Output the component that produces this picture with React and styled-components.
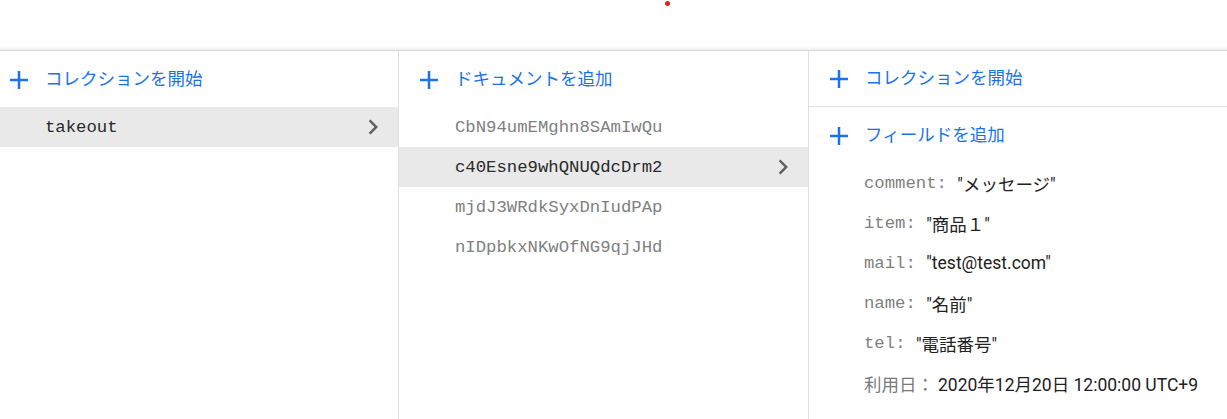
import React from "react";
import styled, { createGlobalStyle } from "styled-components";

const GlobalStyle = createGlobalStyle`
  html, body { margin: 0; padding: 0; background: #ffffff; }
  body {
    font-family: Roboto, "Noto Sans CJK JP", "Noto Sans", sans-serif;
    -webkit-font-smoothing: antialiased;
  }
  * { box-sizing: border-box; }
`;

const Page = styled.div`
  width: 1227px;
  height: 419px;
  overflow: hidden;
  display: flex;
  flex-direction: column;
  background: #fff;
`;

const TopBar = styled.div`
  position: relative;
  height: 51px;
  flex: none;
  background: linear-gradient(to bottom, #ffffff 0, #ffffff 46px, #f7f7f7 48px, #f0f0f0 50px);
  border-bottom: 1px solid #d6d6d6;
`;

const RecordDot = styled.span`
  position: absolute;
  left: 665px;
  top: 1px;
  width: 5px;
  height: 5px;
  border-radius: 50%;
  background: #e0201b;
`;

const Columns = styled.div`
  flex: 1;
  display: grid;
  grid-template-columns: 399px 410px 1fr;
  min-height: 0;
`;

const Column = styled.section`
  display: flex;
  flex-direction: column;
  border-right: ${(p) => (p.$last ? "none" : "1px solid #e0e0e0")};
  min-width: 0;
`;

const ActionRow = styled.div`
  height: 56px;
  flex: none;
  display: flex;
  align-items: center;
  padding-left: ${(p) => p.$indent}px;
  gap: 17px;
  color: #1a73e8;
  font-size: 17.5px;
  border-bottom: ${(p) => (p.$divider ? "1px solid #e0e0e0" : "none")};
`;

const PlusIcon = styled.svg`
  width: 18px;
  height: 18px;
  flex: none;
  margin-top: 1px;
`;

const ActionLabel = styled.span`
  line-height: 1;
  padding-top: 1px;
`;

const ItemRow = styled.div`
  height: 40px;
  flex: none;
  display: flex;
  align-items: center;
  justify-content: space-between;
  padding-left: ${(p) => p.$indent}px;
  padding-right: 10px;
  background: ${(p) => (p.$selected ? "#e9e9e9" : "transparent")};
`;

const MonoText = styled.span`
  font-family: "Liberation Mono", "DejaVu Sans Mono", monospace;
  font-size: 17.3px;
  color: ${(p) => (p.$dark ? "#2a2a2a" : "#808080")};
  white-space: nowrap;
`;

const Chevron = styled.svg`
  width: 30px;
  height: 30px;
  flex: none;
`;

const FieldRow = styled.div`
  height: 40px;
  flex: none;
  display: flex;
  align-items: center;
  padding-left: 55px;
  white-space: nowrap;
`;

const FieldKey = styled.span`
  font-family: "Liberation Mono", "DejaVu Sans Mono", monospace;
  font-size: 17.3px;
  color: #808080;
  white-space: pre;
`;

const FieldLabel = styled.span`
  font-family: Roboto, "Noto Sans CJK JP", sans-serif;
  font-size: 17.5px;
  color: #7a7a7a;
  margin-right: 4px;
`;

const FieldValue = styled.span`
  font-family: Roboto, "Noto Sans CJK JP", sans-serif;
  font-size: 17.5px;
  color: #212121;
  letter-spacing: 0;
`;

const Plus = () => (
  <PlusIcon viewBox="0 0 18 18">
    <path d="M9 0v18M0 9h18" stroke="#1a73e8" strokeWidth="2.5" fill="none" />
  </PlusIcon>
);

const ChevronRight = () => (
  <Chevron viewBox="0 0 24 24">
    <path d="M10 6L8.59 7.41 13.17 12l-4.58 4.59L10 18l6-6z" fill="#616161" />
  </Chevron>
);

const Action = ({ indent, divider, children }) => (
  <ActionRow $indent={indent} $divider={divider}>
    <Plus />
    <ActionLabel>{children}</ActionLabel>
  </ActionRow>
);

const documents = [
  "CbN94umEMghn8SAmIwQu",
  "c40Esne9whQNUQdcDrm2",
  "mjdJ3WRdkSyxDnIudPAp",
  "nIDpbkxNKwOfNG9qjJHd",
];

const fields = [
  ["comment", '"メッセージ"'],
  ["item", '"商品１"'],
  ["mail", '"test@test.com"'],
  ["name", '"名前"'],
  ["tel", '"電話番号"'],
];

export default function App() {
  return (
    <>
      <GlobalStyle />
      <Page>
        <TopBar>
          <RecordDot />
        </TopBar>
        <Columns>
          <Column>
            <Action indent={10}>コレクションを開始</Action>
            <ItemRow $indent={45} $selected>
              <MonoText $dark>takeout</MonoText>
              <ChevronRight />
            </ItemRow>
          </Column>
          <Column>
            <Action indent={21}>ドキュメントを追加</Action>
            {documents.map((id, i) => (
              <ItemRow key={id} $indent={56} $selected={i === 1}>
                <MonoText $dark={i === 1}>{id}</MonoText>
                {i === 1 && <ChevronRight />}
              </ItemRow>
            ))}
          </Column>
          <Column $last>
            <Action indent={21} divider>
              コレクションを開始
            </Action>
            <Action indent={21}>フィールドを追加</Action>
            {fields.map(([k, v]) => (
              <FieldRow key={k}>
                <FieldKey>{k}: </FieldKey>
                <FieldValue>{v}</FieldValue>
              </FieldRow>
            ))}
            <FieldRow>
              <FieldLabel>利用日：</FieldLabel>
              <FieldValue>2020年12月20日 12:00:00 UTC+9</FieldValue>
            </FieldRow>
          </Column>
        </Columns>
      </Page>
    </>
  );
}
